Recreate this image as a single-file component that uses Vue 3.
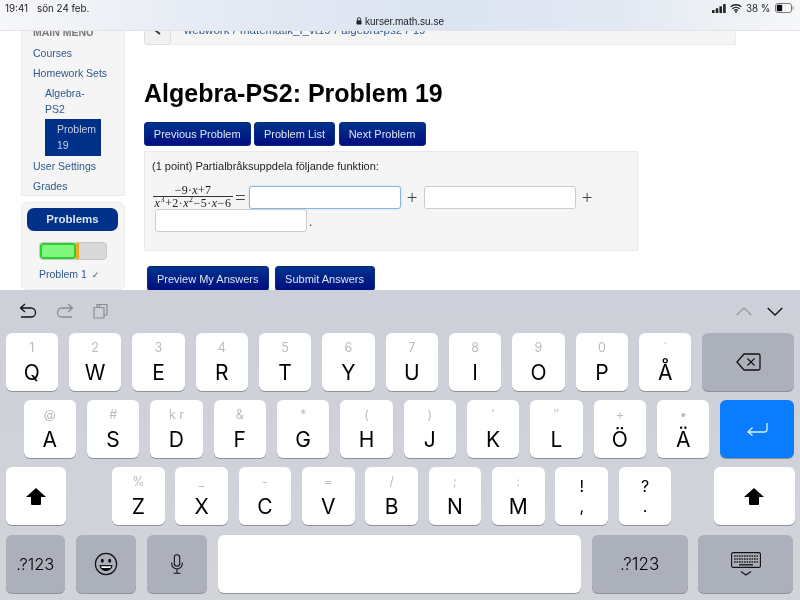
<script setup>
const row1 = [['1','Q'],['2','W'],['3','E'],['4','R'],['5','T'],['6','Y'],['7','U'],['8','I'],['9','O'],['0','P'],['`','Å']]
const row2 = [['@','A'],['#','S'],['k r','D'],['&','F'],['*','G'],['(','H'],[')','J'],['′','K'],['″','L'],['+','Ö'],['•','Ä']]
const row3 = [['%','Z'],['_','X'],['-','C'],['=','V'],['/','B'],[';','N'],[':','M']]
</script>

<template>
  <div class="screen">
    <div class="status">
      <div class="status-top">
        <span class="time">19:41</span>
        <span class="date">sön 24 feb.</span>
        <span class="status-right">
          <svg class="signal" width="14" height="9" viewBox="0 0 14 9"><rect x="0" y="6" width="2.6" height="3" rx=".5"/><rect x="3.7" y="4.3" width="2.6" height="4.7" rx=".5"/><rect x="7.4" y="2.2" width="2.6" height="6.8" rx=".5"/><rect x="11.1" y="0" width="2.6" height="9" rx=".5"/></svg>
          <svg class="wifi" width="12" height="9" viewBox="0 0 12 9"><path d="M.6 2.9a7.8 7.8 0 0 1 10.8 0M2.4 4.8a5.2 5.2 0 0 1 7.2 0M4.2 6.6a2.6 2.6 0 0 1 3.6 0" fill="none" stroke="#222" stroke-width="1.3"/><circle cx="6" cy="8" r="1" fill="#222"/></svg>
          <span class="pct">38 %</span>
          <svg class="battery" width="19" height="10" viewBox="0 0 19 10"><rect x=".5" y=".5" width="16" height="9" rx="2.4" fill="none" stroke="#777"/><rect x="1.8" y="1.8" width="5.4" height="6.4" rx="1" fill="#111"/><rect x="17.6" y="3.4" width="1" height="3.2" fill="#888"/></svg>
        </span>
      </div>
      <div class="url">
        <svg width="6" height="8" viewBox="0 0 6 8"><path d="M1.4 3.4V2.2a1.6 1.6 0 0 1 3.2 0v1.2" fill="none" stroke="#222" stroke-width=".9"/><rect x=".5" y="3.3" width="5" height="4.2" rx=".7" fill="#222"/></svg>
        <span>kurser.math.su.se</span>
      </div>
    </div>

    <div class="page">
      <aside class="side">
        <nav class="menu">
          <div class="menu-head">MAIN MENU</div>
          <a class="lnk">Courses</a>
          <a class="lnk">Homework Sets</a>
          <a class="lnk sub">Algebra-PS2</a>
          <a class="lnk cur">Problem 19</a>
          <a class="lnk">User Settings</a>
          <a class="lnk">Grades</a>
        </nav>
        <div class="probs">
          <div class="pill">Problems</div>
          <div class="progress"><span class="good"></span><span class="warn"></span></div>
          <a class="lnk prob">Problem 1 <span class="check">✓</span></a>
        </div>
      </aside>

      <main class="main">
        <div class="crumbs">
          <div class="back"><svg width="8" height="9" viewBox="0 0 8 9"><path d="M6.5 1 2 5l4 3" fill="none" stroke="#333" stroke-width="1.8"/></svg></div>
          <div class="trail">webwork / matematik_I_vt19 / algebra-ps2 / 19</div>
        </div>
        <h1>Algebra-PS2: Problem 19</h1>
        <div class="nav-btns">
          <button class="btn w-prev">Previous Problem</button>
          <button class="btn w-list">Problem List</button>
          <button class="btn w-next">Next Problem</button>
        </div>
        <section class="problem">
          <p class="q">(1 point) Partialbråksuppdela följande funktion:</p>
          <div class="eq">
            <span class="frac">
              <span class="num">−9·<i>x</i>+7</span>
              <span class="den"><i>x</i><sup>3</sup>+2·<i>x</i><sup>2</sup>−5·<i>x</i>−6</span>
            </span>
            <span class="op eqs">=</span>
            <span class="inp focus"></span>
            <span class="op plus">+</span>
            <span class="inp"></span>
            <span class="op plus">+</span>
          </div>
          <div class="eq2"><span class="inp"></span><span class="dot">.</span></div>
        </section>
        <div class="act-btns">
          <button class="btn w-prev2">Preview My Answers</button>
          <button class="btn w-sub">Submit Answers</button>
        </div>
      </main>
    </div>

    <div class="kb">
      <div class="tools">
        <div class="tools-l">
          <svg width="18" height="16" viewBox="0 0 18 16"><path d="M6 1 1.5 5 6 9M1.5 5H12a4.5 4.5 0 0 1 0 9H2" fill="none" stroke="#111" stroke-width="1.3"/></svg>
          <svg width="18" height="16" viewBox="0 0 18 16"><path d="M12 1l4.5 4L12 9M16.5 5H6a4.5 4.5 0 0 0 0 9h10" fill="none" stroke="#8b8e94" stroke-width="1.3"/></svg>
          <svg width="16" height="16" viewBox="0 0 16 16"><path d="M1 4.5h10V15H1zM4 4.5V1.5h10V12h-3M6.5 1.5v3" fill="none" stroke="#8b8e94" stroke-width="1.2"/></svg>
        </div>
        <div class="tools-r">
          <svg width="16" height="9" viewBox="0 0 16 9"><path d="M.7 8 8 1l7.300 7" fill="none" stroke="#92959b" stroke-width="1.2"/></svg>
          <svg width="16" height="9" viewBox="0 0 16 9"><path d="M.7 1 8 8l7.300-7" fill="none" stroke="#111" stroke-width="1.3"/></svg>
        </div>
      </div>

      <div class="row r1">
        <div v-for="k in row1" :key="k[1]" class="key"><span class="hint">{{ k[0] }}</span><span class="let">{{ k[1] }}</span></div>
        <div class="key fn backspace">
          <svg width="25" height="18" viewBox="0 0 25 18"><path d="M8 1h14.500a1.500 1.500 0 0 1 1.500 1.500v13a1.500 1.500 0 0 1-1.500 1.500H8L1 9z" fill="none" stroke="#111" stroke-width="1.3"/><path d="M11.500 5.500l7 7M18.500 5.500l-7 7" stroke="#111" stroke-width="1.200"/></svg>
        </div>
      </div>

      <div class="row r2">
        <div v-for="k in row2" :key="k[1]" class="key"><span class="hint">{{ k[0] }}</span><span class="let">{{ k[1] }}</span></div>
        <div class="key enter">
          <svg width="22" height="14" viewBox="0 0 22 14"><path d="M21 1v6.500a2.500 2.500 0 0 1-2.500 2.500H2M6.500 5.500 2 10l4.500 3.500" fill="none" stroke="#dcecff" stroke-width="1.300"/></svg>
        </div>
      </div>

      <div class="row r3">
        <div class="key shift-l"><svg width="20" height="17" viewBox="0 0 20 17"><path d="M10 0 20 9h-5v7a1 1 0 0 1-1 1H6a1 1 0 0 1-1-1V9H0z" fill="#000"/></svg></div>
        <div v-for="k in row3" :key="k[1]" class="key"><span class="hint">{{ k[0] }}</span><span class="let">{{ k[1] }}</span></div>
        <div class="key pair"><span>!</span><span>,</span></div>
        <div class="key pair"><span>?</span><span>.</span></div>
        <div class="key shift-r"><svg width="20" height="17" viewBox="0 0 20 17"><path d="M10 0 20 9h-5v7a1 1 0 0 1-1 1H6a1 1 0 0 1-1-1V9H0z" fill="#000"/></svg></div>
      </div>

      <div class="row r4">
        <div class="key fn num-l">.?123</div>
        <div class="key fn emoji">
          <svg width="24" height="24" viewBox="0 0 24 24"><circle cx="12" cy="12" r="10.600" fill="none" stroke="#111" stroke-width="1.200"/><ellipse cx="8.300" cy="8.800" rx="1.500" ry="2" fill="#111"/><ellipse cx="15.700" cy="8.800" rx="1.500" ry="2" fill="#111"/><path d="M5.500 13h13c0 3.600-3 6-6.500 6s-6.500-2.400-6.500-6z" fill="#111"/><path d="M7 14.200h10c-.2 1-.5 1.400-1 1.800H8c-.5-.4-.8-.8-1-1.800z" fill="#fff"/></svg>
        </div>
        <div class="key fn mic">
          <svg width="12" height="20" viewBox="0 0 12 20"><rect x="3.300" y=".7" width="5.400" height="11.600" rx="2.700" fill="none" stroke="#111" stroke-width="1.100"/><path d="M.7 8.500v1.200a5.300 5.300 0 0 0 10.600 0V8.500M6 15v4M2.500 19.300h7" fill="none" stroke="#111" stroke-width="1.100"/></svg>
        </div>
        <div class="key space"></div>
        <div class="key fn num-r">.?123</div>
        <div class="key fn hide">
          <svg width="30" height="24" viewBox="0 0 30 24"><rect x=".6" y=".6" width="28.800" height="14.800" rx="1.500" fill="none" stroke="#111" stroke-width="1.100"/><path d="M3 4h24M3 7h24M3 10h24" stroke="#222" stroke-width="1.700" stroke-dasharray="1.700 .8"/><path d="M8 12.800h14" stroke="#111" stroke-width="1.300"/><path d="M10 19.500l5 3.500 5-3.500" fill="none" stroke="#111" stroke-width="1.100"/></svg>
        </div>
      </div>
    </div>
  </div>
</template>

<style>
html, body { margin: 0; background: #fff; }
</style>

<style scoped>
.screen { position: relative; width: 800px; height: 600px; overflow: hidden; font-family: "Liberation Sans", Arial, sans-serif; background: #fff; filter: blur(.3px); }

.status { position: absolute; left: 0; top: 0; right: 0; height: 31px; z-index: 2; box-sizing: border-box; border-bottom: 1px solid #e2e4e8; color: #222; background: linear-gradient(90deg, #f6f7f9 0%, #e6ebf4 25%, #dce4f2 55%, #e3e9f3 78%, #f6f7f8 100%); font-family: Inter, "Liberation Sans", sans-serif; }
.status-top { display: flex; align-items: center; height: 16px; padding: 0 6.500px 0 5px; font-size: 9.800px; }
.time { width: 32px; }
.status-right { margin-left: auto; display: flex; align-items: center; gap: 4px; }
.signal { fill: #222; }
.url { display: flex; justify-content: center; align-items: center; gap: 3px; height: 10px; font: 10px "Liberation Sans", Arial, sans-serif; }

.page { display: flex; height: 290px; padding-left: 21px; box-sizing: border-box; overflow: hidden; color: #000; }
.side { width: 104px; flex: none; display: flex; flex-direction: column; gap: 6px; font-size: 10.500px; }
.menu { background: #f5f5f5; border: 1px solid #ececec; border-top: 0; height: 196px; box-sizing: border-box; padding: 26px 11px 0; display: flex; flex-direction: column; }
.menu-head { font-weight: bold; color: #7a7a7a; line-height: 13px; margin-bottom: 7px; }
.lnk { display: block; color: #2c5a8c; line-height: 15.500px; margin-bottom: 4.700px; }
.sub { margin-left: 12px; width: 44px; margin-bottom: 2px; }
.cur { background: #003087; color: #c4d0e4; margin-left: 12px; padding: 3px 0 3px 12px; width: 44px; margin-bottom: 2.500px; }
.probs { background: #f5f5f5; border: 1px solid #ececec; border-radius: 6px; padding: 5px 5px 0; height: 100px; box-sizing: border-box; }
.pill { background: #003087; color: #dbe3f0; border-radius: 7px; width: 91px; height: 23px; line-height: 23px; text-align: center; font-weight: bold; font-size: 11.500px; }
.progress { display: flex; width: 68px; height: 18px; margin: 11px 0 0 12px; background: #d9d9d9; border: 1px solid #c9c9c9; border-radius: 4px; box-sizing: border-box; overflow: hidden; }
.good { width: 36px; background: #80f880; border: 2px solid #2fcf2f; border-radius: 3px; box-sizing: border-box; }
.warn { width: 3px; background: #f5a623; }
.prob { margin: 7px 0 0 12px; white-space: nowrap; }
.check { margin-left: 2px; font-family: "DejaVu Sans", sans-serif; font-size: 9px; }

.main { margin-left: 19px; width: 592px; flex: none; }
.crumbs { display: flex; height: 45px; }
.back { width: 27px; height: 45px; box-sizing: border-box; background: #f1f1f1; border: 1px solid #ddd; border-radius: 3px; display: flex; align-items: flex-end; justify-content: center; padding-bottom: 9px; }
.trail { flex: 1; background: #f5f5f5; box-sizing: border-box; border-bottom: 1px solid #ececec; border-right: 1px solid #ececec; padding: 25px 0 0 13px; font-size: 11.500px; line-height: 11px; color: #2c5a8c; word-spacing: .5px; }
h1 { margin: 0; font-size: 25px; line-height: 30px; padding-top: 33px; height: 30px; }
.nav-btns { display: flex; gap: 3.500px; margin-top: 14px; }
.btn { height: 23.500px; padding: 0; box-sizing: border-box; border: 1px solid #0a2a7a; border-radius: 3px; color: #dde4f2; font: 11px "Liberation Sans", Arial, sans-serif; background: linear-gradient(180deg, #00338c 0%, #000f80 100%); flex: none; }
.w-prev { width: 106.500px; }
.w-list { width: 81px; }
.w-next { width: 87px; }
.problem { width: 494px; height: 100px; box-sizing: border-box; margin-top: 5.500px; background: #f5f5f5; border: 1px solid #e9e9e9; padding: 7px 7px 0; }
.q { margin: 0; font-size: 11px; line-height: 14px; color: #1d1d1d; }
.eq { display: flex; align-items: center; margin-top: 13px; height: 23px; color: #222; font-family: "Liberation Serif", serif; }
.frac { display: inline-flex; flex-direction: column; align-items: center; width: 80px; margin: -2px 0 0 1px; font-size: 12px; line-height: 12px; }
.num { border-bottom: 1px solid #333; width: 80px; text-align: center; letter-spacing: .3px; }
.den { white-space: nowrap; letter-spacing: .5px; }
.den sup { font-size: 8px; line-height: 0; }
.op { color: #444; line-height: 23px; }
.eqs { margin: 0 3px 0 2px; font-size: 19px; }
.plus { width: 23px; text-align: center; font-size: 19px; flex: none; }
.inp { display: block; width: 152px; height: 23px; box-sizing: border-box; background: #fff; border: 1px solid #ccc; border-radius: 3px; flex: none; }
.focus { border-color: #8ab6dc; box-shadow: 0 0 2px #b5d4ee; }
.eq2 { display: flex; align-items: center; padding-left: 3px; }
.dot { margin-left: 2px; font-size: 12px; color: #333; padding-top: 3px; }
.act-btns { display: flex; gap: 6px; margin: 15px 0 0 3px; }
.w-prev2 { width: 121.500px; height: 25px; }
.w-sub { width: 100px; height: 25px; }

.kb { height: 310px; box-sizing: border-box; background: linear-gradient(180deg, #cdd0d8 0%, #cfd2d9 60%, #d2d4d9 100%); font-family: Inter, "Liberation Sans", sans-serif; display: flex; flex-direction: column; gap: 9.300px; }
.tools { display: flex; justify-content: space-between; align-items: center; height: 33.500px; padding: 9px 17px 0 19px; box-sizing: border-box; }
.tools-l { display: flex; gap: 19px; align-items: center; }
.tools-r { display: flex; gap: 15px; align-items: center; }
.row { display: flex; height: 58px; gap: 10.850px; flex: none; }
.r1 { padding-left: 5.500px; }
.r2 { padding-left: 23.500px; }
.r3 { padding-left: 5.500px; }
.r4 { padding-left: 6px; }
.key { width: 52.500px; height: 58px; flex: none; box-sizing: border-box; background: #fff; border-radius: 6px; box-shadow: 0 1px 0 #8f9298; display: flex; flex-direction: column; align-items: center; justify-content: center; color: #000; }
.hint { height: 16px; line-height: 16px; margin-top: 2px; font-size: 12.500px; color: #bcbcbc; white-space: nowrap; }
.let { height: 26px; line-height: 26px; margin-top: 4px; font-size: 21px; }
.fn { background: #abb0ba; }
.backspace { width: 92px; }
.enter { width: 74px; background: #0a7cff; }
.shift-l { width: 60px; margin-right: 35.700px; }
.shift-r { width: 81.500px; margin-left: 31.500px; }
.pair { font-size: 16px; line-height: 20px; }
.num-l { width: 58.500px; margin-right: .7px; font-size: 16.500px; font-weight: 300; }
.emoji, .mic { width: 60px; }
.space { width: 363px; }
.num-r { width: 96px; font-size: 17px; font-weight: 300; }
.hide { width: 94.500px; }
</style>
